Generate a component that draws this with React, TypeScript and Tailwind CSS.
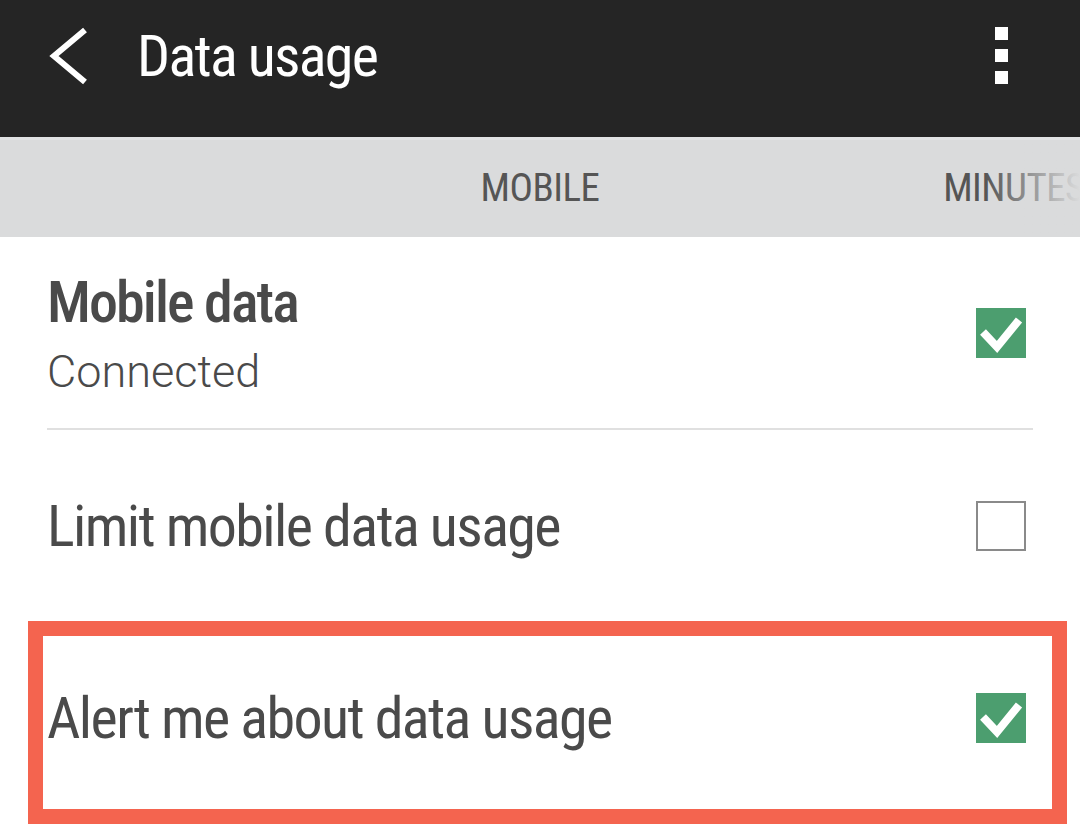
const Check = ({ checked }: { checked: boolean }) =>
  checked ? (
    <div className="h-[50px] w-[50px] shrink-0 bg-[#4c9e6f]">
      <svg viewBox="0 0 50 50" className="h-full w-full">
        <path d="M7 24 L21 39 L43 12" fill="none" stroke="#fff" strokeWidth="8" strokeLinejoin="miter" />
      </svg>
    </div>
  ) : (
    <div className="h-[50px] w-[50px] shrink-0 border-2 border-[#8a8a8a] bg-white" />
  );

const App = () => {
  return (
    <div className="h-[829px] w-[1080px] overflow-hidden bg-white font-['Roboto_Condensed','Liberation_Sans_Narrow',Roboto,sans-serif] text-[#4a4a4a] [font-stretch:75%]">
      {/* action bar */}
      <div className="flex h-[137px] items-center bg-[#252525] pb-[26px] pl-[48px] pr-[72px] text-white">
        <svg viewBox="0 0 40 60" className="h-[60px] w-[40px]">
          <path d="M37 4 L6 30 L37 56" fill="none" stroke="#fff" strokeWidth="6" />
        </svg>
        <h1 className="ml-[49px] text-[58px] leading-none tracking-[-1.7px]">Data usage</h1>
        <div className="ml-auto flex flex-col gap-[9px]">
          <span className="h-[13px] w-[13px] bg-white" />
          <span className="h-[13px] w-[13px] bg-white" />
          <span className="h-[13px] w-[13px] bg-white" />
        </div>
      </div>

      {/* tabs */}
      <div className="relative flex h-[100px] items-center overflow-hidden border-t-[3px] border-[#e2e3e4] bg-[#dadbdc] text-[39px] tracking-[-0.5px] text-[#555]">
        <div className="w-[306px] shrink-0" />
        <div className="flex w-[468px] shrink-0 justify-center">MOBILE</div>
        <div className="flex w-[468px] shrink-0 justify-center pl-[12px]">MINUTES</div>
        <div className="absolute inset-y-0 right-0 w-[95px] bg-gradient-to-r from-[#dadbdc]/0 to-[#dadbdc]" />
      </div>

      {/* mobile data */}
      <div className="pl-[47px] pr-[47px]">
        <div className="flex items-center border-b-2 border-[#e0e0e0] pb-[30px] pt-[31px]">
          <div className="flex flex-col gap-[10px]">
            <span className="text-[58px] font-medium leading-[68px] tracking-[-1.9px]">Mobile data</span>
            <span className="font-['Roboto',sans-serif] text-[45px] font-light leading-[52px] [font-stretch:100%]">Connected</span>
          </div>
          <div className="ml-auto mr-[7px]">
            <Check checked />
          </div>
        </div>
      </div>

      {/* limit */}
      <div className="flex h-[191px] items-center pl-[47px] pr-[54px]">
        <span className="text-[58px] leading-[68px] tracking-[-1.6px]">Limit mobile data usage</span>
        <div className="ml-auto">
          <Check checked={false} />
        </div>
      </div>

      {/* alert (highlighted) */}
      <div className="ml-[28px] mr-[13px] flex h-[203px] items-center border-[15px] border-[#f4644f] pb-[10px] pl-[4px] pr-[26px]">
        <span className="text-[58px] leading-[68px] tracking-[-1.6px]">Alert me about data usage</span>
        <div className="ml-auto">
          <Check checked />
        </div>
      </div>
    </div>
  );
};

export default App;
